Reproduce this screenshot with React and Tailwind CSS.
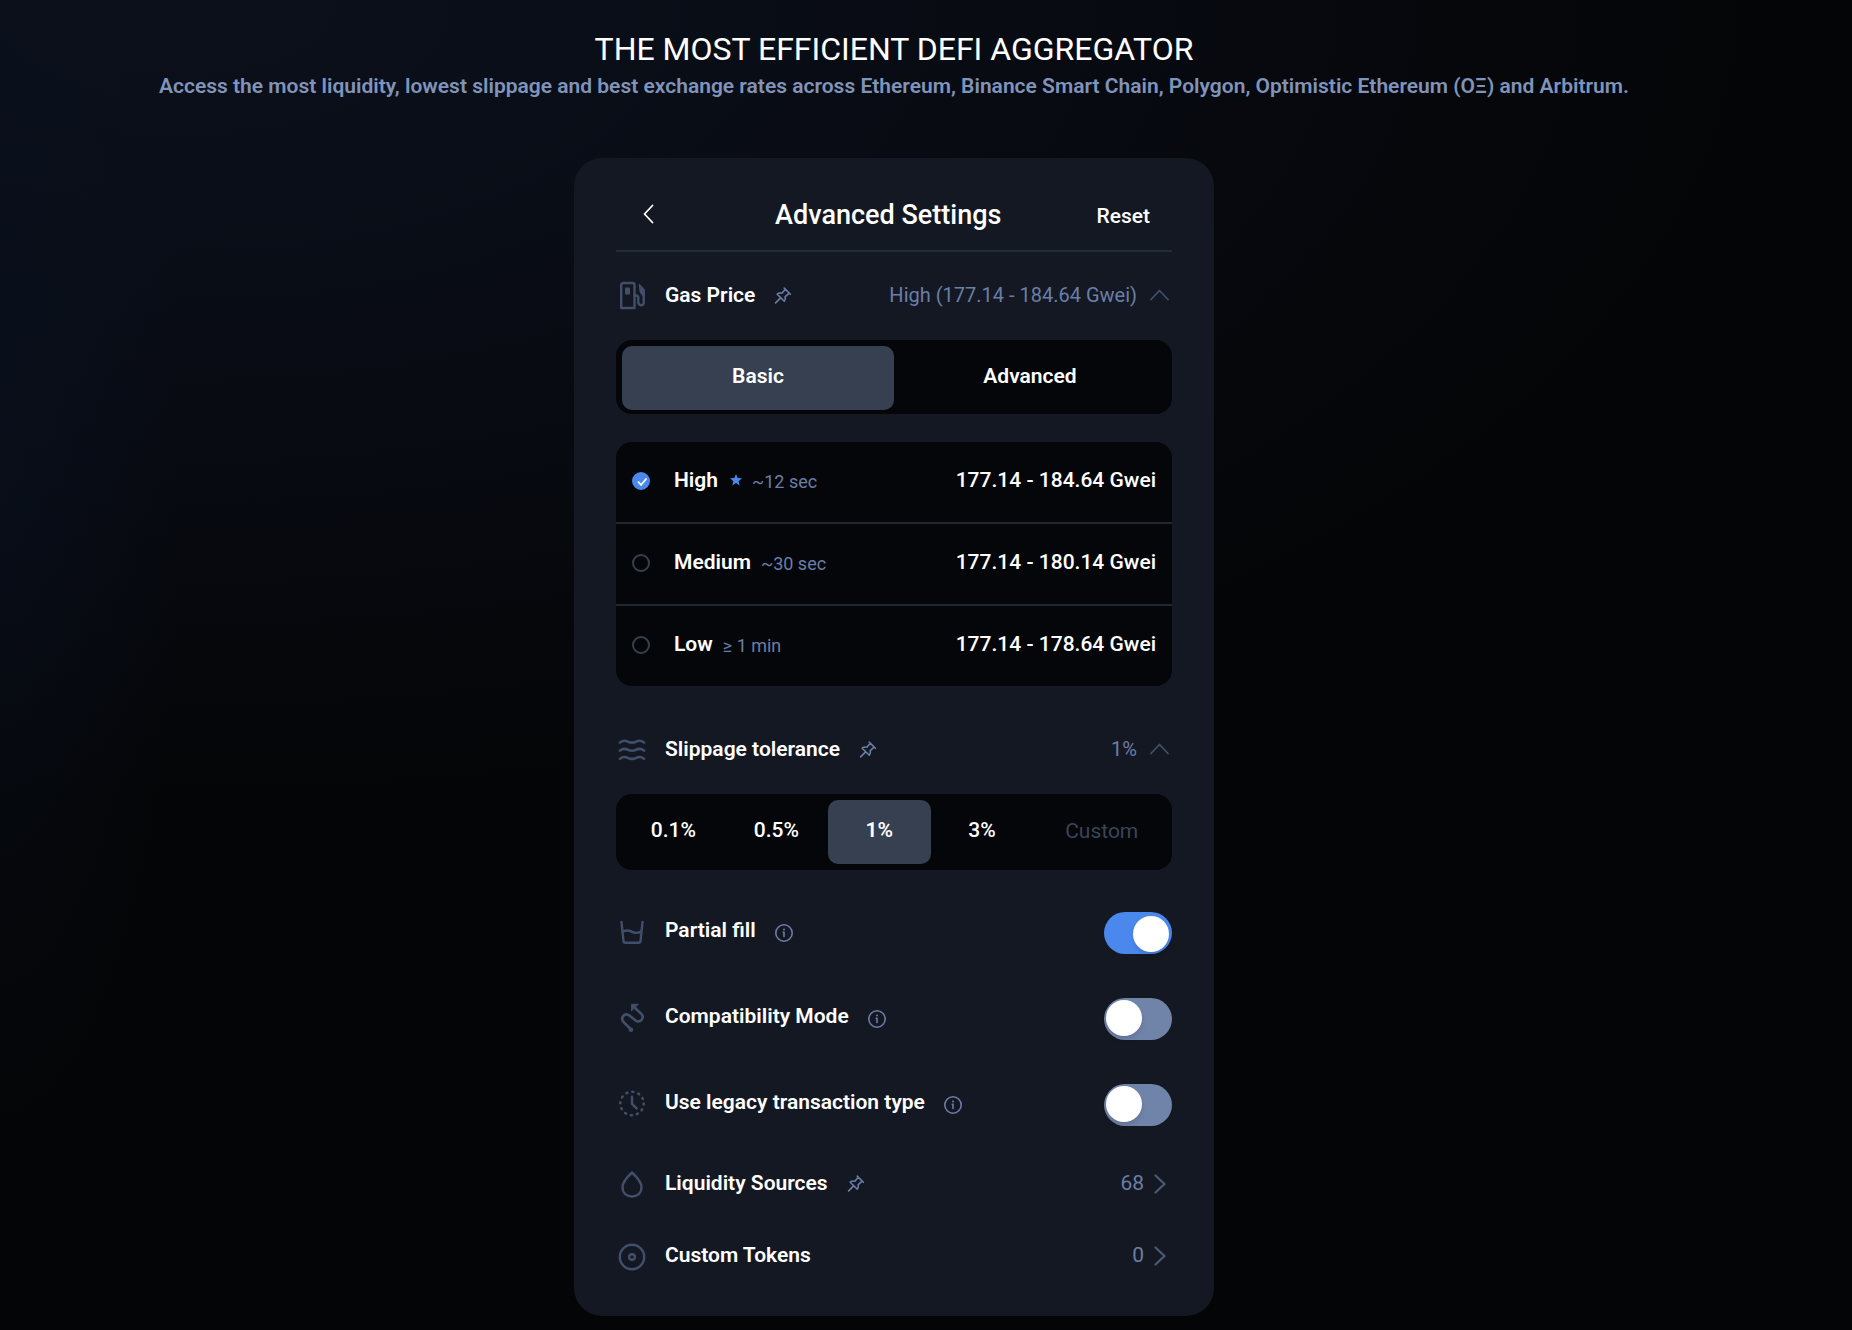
import { useState } from "react";

const line = { fill: "none", stroke: "currentColor", strokeLinecap: "round", strokeLinejoin: "round" };

function GasIcon() {
  return (
    <svg className="size-8 text-[#424f6a]" viewBox="0 0 32 32" strokeWidth="2.4" aria-hidden="true" {...line}>
      <path d="M5.2 28V5a2 2 0 0 1 2-2h9.300a2 2 0 0 1 2 2v23z" />
      <rect x="9" y="7.500" width="5" height="7" rx="0.8" fill="currentColor" stroke="none" />
      <path d="M18.500 15.500h1.500a2.300 2.300 0 0 1 2.300 2.300v4.700a2.700 2.700 0 0 0 5.400 0V10" />
      <path d="M23.300 4.500l3 3.200a4 4 0 0 1 1.400 3v6c-1-2.700-3.700-3-3.700-6z" fill="currentColor" strokeWidth="1.200" />
    </svg>
  );
}

function WavesIcon() {
  return (
    <svg className="size-8 text-[#424f6a]" viewBox="0 0 32 32" strokeWidth="2.600" aria-hidden="true" {...line}>
      <path d="M4 8.500c2.500-2 5.200-2.200 7.700-.9 3 1.500 5.600 1.500 8.600 0 2.500-1.300 5.200-1.100 7.700.9" />
      <path d="M4 16.600c2.500-2 5.200-2.200 7.700-.9 3 1.500 5.600 1.500 8.600 0 2.500-1.300 5.200-1.100 7.700.9" />
      <path d="M4 24.700c2.500-2 5.200-2.200 7.700-.9 3 1.500 5.600 1.500 8.600 0 2.500-1.300 5.200-1.100 7.700.9" />
    </svg>
  );
}

function GlassIcon() {
  return (
    <svg className="size-8 text-[#424f6a]" viewBox="0 0 32 32" strokeWidth="2.400" aria-hidden="true" {...line}>
      <path d="M5.500 5l2 19.200a1.800 1.800 0 0 0 1.800 1.600h13.400a1.800 1.800 0 0 0 1.800-1.600l2-19.200" />
      <path d="M6.500 14.800c3-1.800 6-1.800 9-.2 3.200 1.700 6.500 1.700 9.800 0" />
    </svg>
  );
}

function RouteIcon() {
  return (
    <svg className="size-8 text-[#424f6a]" viewBox="0 0 32 32" strokeWidth="2.700" aria-hidden="true" {...line}>
      <path d="M15 26.500L8 19.500c-4.500-4.500.5-10.500 5.700-6.800l5.600 4.600c5 3.400 9.700-2.300 5.900-6.600L18 4" />
      <path d="M15.500 7.500V1.300h6.500z" fill="currentColor" strokeWidth="1" />
      <circle cx="15" cy="26.700" r="2.300" fill="currentColor" stroke="none" />
    </svg>
  );
}

function ClockIcon() {
  return (
    <svg className="size-8 text-[#424f6a]" viewBox="0 0 32 32" strokeWidth="2.500" aria-hidden="true" {...line}>
      <circle cx="16" cy="14.500" r="11.700" strokeDasharray="1.100 5.026" />
      <path d="M16 7.800v7l4.600 4.600" />
    </svg>
  );
}

function DropIcon() {
  return (
    <svg className="size-8 text-[#424f6a]" viewBox="0 0 32 32" strokeWidth="2.400" aria-hidden="true" {...line}>
      <path d="M16 4.500c-4.500 4.200-9.500 9-9.500 14.800C6.500 25 10.800 28.500 16 28.500s9.500-3.500 9.500-9.200C25.500 13.500 20.500 8.700 16 4.500z" />
    </svg>
  );
}

function TokenIcon() {
  return (
    <svg className="size-8 text-[#424f6a]" viewBox="0 0 32 32" strokeWidth="2.400" aria-hidden="true" {...line}>
      <circle cx="16" cy="17" r="12.200" />
      <circle cx="16" cy="17" r="2.800" />
    </svg>
  );
}

function PinIcon() {
  return (
    <svg className="size-5 text-[#6b7ea8]" viewBox="0 0 20 20" strokeWidth="1.600" aria-hidden="true" {...line}>
      <path d="M11.200 2.100l6.200 6.200M12.400 3.300l-3.600 4c-1.800-.5-3.300-.2-4.600.9l7.100 7.100c1.100-1.300 1.400-2.800.9-4.600l4-3.600M7.600 11.900l-5 5" />
    </svg>
  );
}

function InfoIcon() {
  return (
    <svg className="size-5 text-[#6b7ea8]" viewBox="0 0 20 20" strokeWidth="1.600" aria-hidden="true" {...line}>
      <circle cx="10" cy="10" r="8.200" />
      <path d="M9.200 9.200h.8v4.300" />
      <circle cx="10" cy="6.400" r="1" fill="currentColor" stroke="none" />
    </svg>
  );
}

function ChevronUp() {
  return (
    <svg className="h-5 w-5 text-[#424f6a]" viewBox="0 0 20 20" strokeWidth="1.800" aria-hidden="true" {...line}>
      <path d="M2 13.500L10.500 4.500l8.500 9" />
    </svg>
  );
}

function ChevronRight() {
  return (
    <svg className="h-5 w-3 text-[#4c5a78]" viewBox="0 0 12 20" strokeWidth="2.200" aria-hidden="true" {...line}>
      <path d="M1.500 1.500l9 8.500-9 8.500" />
    </svg>
  );
}

const speeds = [
  { name: "High", time: "~12 sec", price: "177.14 - 184.64 Gwei", star: true },
  { name: "Medium", time: "~30 sec", price: "177.14 - 180.14 Gwei" },
  { name: "Low", time: "≥ 1 min", price: "177.14 - 178.64 Gwei" },
];

function Toggle({ label, icon, on, onChange }) {
  return (
    <label className="flex h-[42px] cursor-pointer items-center">
      {icon}
      <span className="ml-[17px] pb-1 text-[21px] font-semibold">{label}</span>
      <span className="ml-4.5">
        <InfoIcon />
      </span>
      <span className="relative ml-auto h-[42px] w-[68px]">
        <input type="checkbox" role="switch" checked={on} onChange={onChange} className="peer absolute inset-0 size-full appearance-none rounded-full bg-[#7083a9] checked:bg-[#4a88ee]" />
        <span className="pointer-events-none absolute top-0.5 left-0.5 size-9 rounded-full bg-white shadow-md peer-checked:top-1 peer-checked:left-[29px]" />
      </span>
    </label>
  );
}

export default function App() {
  const [mode, setMode] = useState("Basic");
  const [speed, setSpeed] = useState("High");
  const [slippage, setSlippage] = useState("1%");
  const [flags, setFlags] = useState({ partial: true, compat: false, legacy: false });
  const flip = (key) => setFlags((f) => ({ ...f, [key]: !f[key] }));

  return (
    <main className="flex min-h-screen flex-col items-center bg-[#040507] bg-[radial-gradient(ellipse_10%_50%_at_0%_35%,#0a122280_0%,#0a122200_100%),radial-gradient(ellipse_85%_60%_at_10%_0%,#0b101b_0%,#090d16_35%,#04050700_100%)] pt-7 pr-16 pb-3 font-[Roboto,sans-serif] text-white">
      <h1 className="text-[32px] leading-[42px]">THE MOST EFFICIENT DEFI AGGREGATOR</h1>
      <p className="text-[21px] leading-8 font-semibold text-[#8094bb]">
        Access the most liquidity, lowest slippage and best exchange rates across Ethereum, Binance Smart Chain, Polygon, Optimistic Ethereum (OΞ) and Arbitrum.
      </p>

      <section className="mt-14 w-full max-w-[640px] rounded-[28px] bg-[#141822] px-[42px] pt-8 pb-10">
        <header className="flex h-[62px] items-start justify-between border-b-2 border-[#232b38]">
          <button type="button" aria-label="Back" className="ml-6 flex h-12 w-10 items-center">
            <svg className="h-5 w-4" viewBox="0 0 16 20" strokeWidth="1.800" aria-hidden="true" {...line}>
              <path d="M12.500 1.500L4.500 10l8 8.500" />
            </svg>
          </button>
          <h2 className="text-[27px] leading-[50px] font-medium">Advanced Settings</h2>
          <button type="button" className="mr-5.5 text-[21px] leading-[52px] font-medium">Reset</button>
        </header>

        <button type="button" className="mt-6 flex h-10 w-full items-center">
          <GasIcon />
          <span className="ml-[17px] text-[21px] font-semibold">Gas Price</span>
          <span className="ml-4.5"><PinIcon /></span>
          <span className="ml-auto pb-0.5 text-xl text-[#6b7ea8]">High (177.14 - 184.64 Gwei)</span>
          <span className="mr-[3px] ml-3"><ChevronUp /></span>
        </button>

        <div className="mt-6 flex rounded-2xl bg-[#050609] px-1.5 pt-1.5 pb-1">
          {["Basic", "Advanced"].map((name) => (
            <button key={name} type="button" aria-pressed={mode === name} onClick={() => setMode(name)} className="h-16 flex-1 rounded-[10px] pb-0.5 text-[21px] font-semibold aria-pressed:bg-[#364050]">
              {name}
            </button>
          ))}
        </div>

        <div role="radiogroup" aria-label="Gas price" className="mt-7 divide-y-2 divide-[#202733] overflow-hidden rounded-2xl bg-[#050609]">
          {speeds.map((s) => (
            <label key={s.name} className="box-content flex h-20 cursor-pointer items-center px-4 text-[21px]">
              <span className="relative -mt-0.5 size-[18px]">
                <input type="radio" name="speed" checked={speed === s.name} onChange={() => setSpeed(s.name)} className="peer block size-[18px] appearance-none rounded-full border-2 border-[#364050] checked:border-[#4a88ee] checked:bg-[#4a88ee]" />
                <svg className="pointer-events-none absolute inset-0 hidden size-[18px] peer-checked:block" viewBox="0 0 18 18" strokeWidth="1.800" aria-hidden="true" {...line}>
                  <path d="M6.500 10.200l2.500 2.800 5-6" />
                </svg>
              </span>
              <span className="ml-6 pb-0.5 font-semibold">{s.name}</span>
              {s.star && (
                <svg className="mb-1 ml-3 size-3" viewBox="0 0 24 24" fill="#4a88ee" aria-hidden="true">
                  <path d="M12 0l3.200 8.200 8.800.5-6.800 5.600L19.400 23 12 18.200 4.600 23l2.200-8.700L0 8.700l8.800-.5z" />
                </svg>
              )}
              <span className="ml-2.5 text-lg text-[#6b7ea8]">{s.time}</span>
              <span className="ml-auto pb-0.5 font-medium">{s.price}</span>
            </label>
          ))}
        </div>

        <button type="button" className="mt-11 flex h-10 w-full items-center">
          <WavesIcon />
          <span className="ml-[17px] text-[21px] font-semibold">Slippage tolerance</span>
          <span className="ml-4.5"><PinIcon /></span>
          <span className="ml-auto pb-0.5 text-xl text-[#6b7ea8]">1%</span>
          <span className="mr-[3px] ml-3"><ChevronUp /></span>
        </button>

        <div className="mt-6 flex rounded-2xl bg-[#050609] p-1.5 text-[21px] font-medium">
          {["0.1%", "0.5%", "1%", "3%"].map((v) => (
            <button key={v} type="button" aria-pressed={slippage === v} onClick={() => setSlippage(v)} className="h-16 flex-4 rounded-[10px] pb-0.5 aria-pressed:bg-[#364050] aria-pressed:font-semibold">
              {v}
            </button>
          ))}
          <input type="text" aria-label="Custom slippage" placeholder="Custom" className="h-16 w-0 flex-5 bg-transparent pb-0.5 pl-1 text-center font-normal outline-none placeholder:text-[#3a4457]" />
        </div>

        <div className="mt-[42px] flex flex-col gap-11">
          <Toggle label="Partial fill" icon={<GlassIcon />} on={flags.partial} onChange={() => flip("partial")} />
          <Toggle label="Compatibility Mode" icon={<RouteIcon />} on={flags.compat} onChange={() => flip("compat")} />
          <Toggle label="Use legacy transaction type" icon={<ClockIcon />} on={flags.legacy} onChange={() => flip("legacy")} />
        </div>

        <button type="button" className="mt-9 flex h-11 w-full items-center">
          <DropIcon />
          <span className="ml-[17px] text-[21px] font-semibold">Liquidity Sources</span>
          <span className="ml-4.5"><PinIcon /></span>
          <span className="ml-auto text-[21px] text-[#6b7ea8]">68</span>
          <span className="mr-1.5 ml-2.5"><ChevronRight /></span>
        </button>
        <button type="button" className="mt-[30px] flex h-10 w-full items-center">
          <TokenIcon />
          <span className="ml-[17px] text-[21px] font-semibold">Custom Tokens</span>
          <span className="ml-auto text-[21px] text-[#6b7ea8]">0</span>
          <span className="mr-1.5 ml-2.5"><ChevronRight /></span>
        </button>
      </section>
    </main>
  );
}
